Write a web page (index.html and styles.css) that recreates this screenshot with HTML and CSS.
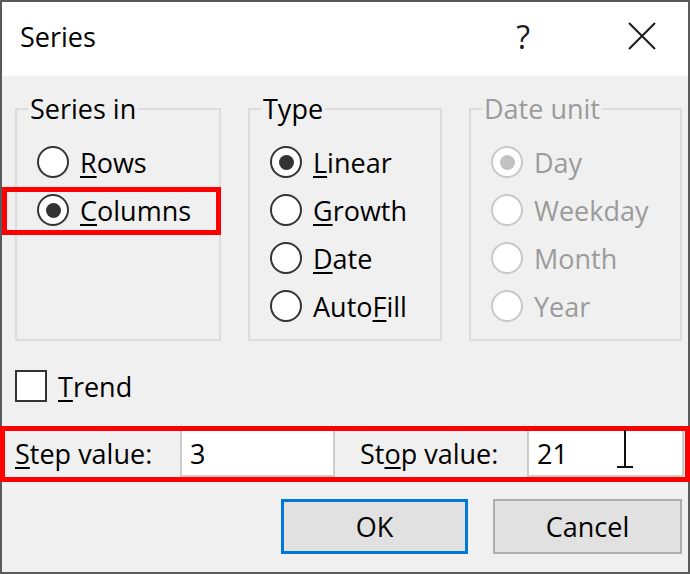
FILE: index.html
```html
<!DOCTYPE html>
<html>
<head>
    <meta charset="utf-8">
    <title>Series</title>
    <link rel="stylesheet" href="styles.css">
</head>
<body>
    <div class="dialog">
        <div class="titlebar">
            <span class="title">Series</span>
            <span class="help">?</span>
            <svg class="close" width="28" height="28" viewBox="0 0 28 28">
                <path d="M1 1 L27 27 M27 1 L1 27" stroke="#1a1a1a" stroke-width="2" fill="none"/>
            </svg>
        </div>
        <div class="content">
            <div class="groups">
                <fieldset class="group">
                    <legend>Series in</legend>
                    <div class="option"><span class="radio"></span><span><u>R</u>ows</span></div>
                    <div class="option"><span class="radio checked"></span><span><u>C</u>olumns</span></div>
                </fieldset>
                <fieldset class="group">
                    <legend>Type</legend>
                    <div class="option"><span class="radio checked"></span><span><u>L</u>inear</span></div>
                    <div class="option"><span class="radio"></span><span><u>G</u>rowth</span></div>
                    <div class="option"><span class="radio"></span><span><u>D</u>ate</span></div>
                    <div class="option"><span class="radio"></span><span>Auto<u>F</u>ill</span></div>
                </fieldset>
                <fieldset class="group disabled">
                    <legend>Date unit</legend>
                    <div class="option"><span class="radio checked"></span><span>Day</span></div>
                    <div class="option"><span class="radio"></span><span>Weekday</span></div>
                    <div class="option"><span class="radio"></span><span>Month</span></div>
                    <div class="option"><span class="radio"></span><span>Year</span></div>
                </fieldset>
            </div>

            <div class="trend">
                <span class="checkbox"></span><span><u>T</u>rend</span>
            </div>

            <div class="values">
                <span class="step-label"><u>S</u>tep value:</span>
                <input class="field step-field" type="text" value="3">
                <span class="stop-label">St<u>o</u>p value:</span>
                <input class="field stop-field" type="text" value="21">
            </div>

            <div class="buttons">
                <button class="btn btn-ok">OK</button>
                <button class="btn btn-cancel">Cancel</button>
            </div>
        </div>

        <!-- red annotation boxes -->
        <div class="mark mark-columns"></div>
        <div class="mark mark-values"></div>
        <svg class="ibeam" width="20" height="40" viewBox="0 0 20 40">
            <path d="M10 0 V37 M2 37 H18" stroke="#111" stroke-width="2" fill="none"/>
        </svg>
    </div>
</body>
</html>
```

FILE: styles.css
```css
* {
    margin: 0;
    padding: 0;
    box-sizing: border-box;
}

body {
    font-family: "Segoe UI", "Open Sans", "Noto Sans", sans-serif;
    font-size: 27px;
    color: #000;
    background: #fff;
}

.dialog {
    position: relative;
    width: 690px;
    height: 574px;
    border: 2px solid #5a5a5a;
    background: #f0f0f0;
    display: flex;
    flex-direction: column;
}

.titlebar {
    height: 74px;
    background: #fff;
    display: flex;
    align-items: center;
    padding-left: 18px;
    padding-bottom: 6px;
}

.help {
    margin-left: auto;
    margin-right: 98px;
    font-size: 32px;
    color: #1a1a1a;
}

.close {
    margin-right: 32px;
}

.content {
    flex: 1;
    padding: 17px 0 0 13px;
}

.groups {
    display: grid;
    grid-template-columns: 206px 194px 213px;
    column-gap: 27px;
}

.group {
    border: 2px solid #dcdcdc;
    padding: 13px 0 9px 20px;
    min-width: 0;
    display: flex;
    flex-direction: column;
}

.group legend {
    margin-left: -9px;
    padding: 0 2px;
    line-height: 32px;
}

.option {
    height: 48px;
    display: flex;
    align-items: center;
    gap: 11px;
}

.radio {
    width: 32px;
    height: 32px;
    border: 2px solid #333;
    border-radius: 50%;
    background: #fff;
    display: flex;
    align-items: center;
    justify-content: center;
}

.radio.checked::after {
    content: "";
    width: 15px;
    height: 15px;
    border-radius: 50%;
    background: #333;
}

.disabled {
    color: #9b9b9b;
}

.disabled .radio {
    border-color: #c8c8c8;
}

.disabled .radio.checked::after {
    background: #c2c2c2;
}

u {
    text-underline-offset: 3px;
    text-decoration-thickness: 2px;
}

.trend {
    margin-top: 21px;
    height: 48px;
    display: flex;
    align-items: center;
    gap: 11px;
}

.checkbox {
    width: 32px;
    height: 32px;
    border: 2px solid #333;
    background: #fff;
}

.values {
    margin-top: 19px;
    height: 48px;
    display: flex;
    align-items: center;
}

.step-label {
    width: 165px;
}

.stop-label {
    width: 167px;
    margin-left: 25px;
}

.field {
    height: 48px;
    border: 2px solid #cccccc;
    background: #fff;
    font: inherit;
    padding: 0 8px;
    outline: none;
}

.step-field {
    width: 155px;
}

.stop-field {
    width: 157px;
}

.buttons {
    margin-top: 22px;
    display: flex;
    justify-content: flex-end;
    gap: 25px;
    padding-right: 6px;
}

.btn {
    height: 55px;
    font: inherit;
    color: #000;
    background: #e1e1e1;
}

.btn-ok {
    width: 187px;
    border: 3px solid #0078d7;
}

.btn-cancel {
    width: 189px;
    border: 2px solid #adadad;
}

.mark {
    position: absolute;
    border: 5px solid #ff0000;
}

.mark-columns {
    left: 0;
    top: 185px;
    width: 219px;
    height: 48px;
}

.mark-values {
    left: -2px;
    top: 424px;
    width: 690px;
    height: 56px;
}

.ibeam {
    position: absolute;
    left: 613px;
    top: 428px;
}
```
